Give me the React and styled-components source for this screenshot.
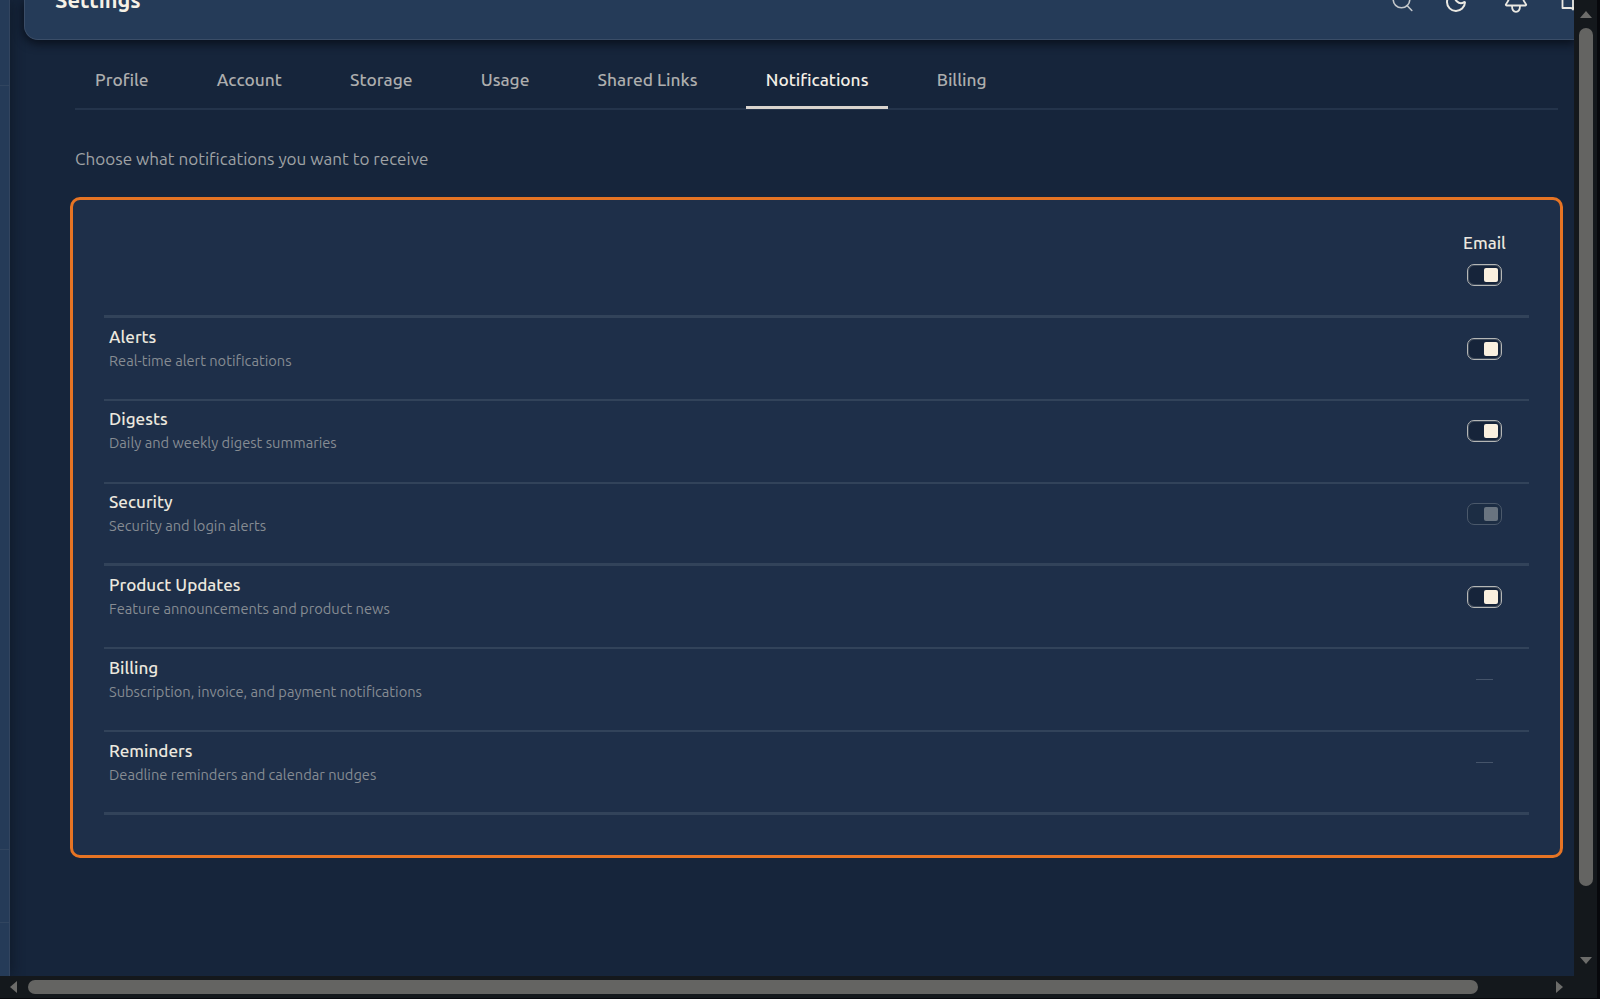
import { useState } from "react";
import styled, { createGlobalStyle } from "styled-components";

const tabs = [
  "Profile",
  "Account",
  "Storage",
  "Usage",
  "Shared Links",
  "Notifications",
  "Billing",
];

const initialRows = [
  {
    title: "Alerts",
    text: "Real-time alert notifications",
    state: "on",
  },
  {
    title: "Digests",
    text: "Daily and weekly digest summaries",
    state: "on",
  },
  {
    title: "Security",
    text: "Security and login alerts",
    state: "locked",
  },
  {
    title: "Product Updates",
    text: "Feature announcements and product news",
    state: "on",
  },
  {
    title: "Billing",
    text: "Subscription, invoice, and payment notifications",
    state: "none",
  },
  {
    title: "Reminders",
    text: "Deadline reminders and calendar nudges",
    state: "none",
  },
];

function Switch({ on, locked, onClick, label }) {
  return (
    <Toggle
      type="button"
      role="switch"
      aria-checked={on}
      aria-label={label}
      disabled={locked}
      $on={on}
      onClick={onClick}
    >
      <Knob />
    </Toggle>
  );
}

function HeaderIcons() {
  return (
    <Icons>
      <Icon width="24" height="24" viewBox="0 0 24 24" $dim>
        <circle cx="10.5" cy="9.5" r="8.3" />
        <path d="M16 15.5 20.8 20.5" />
      </Icon>
      <Icon width="24" height="24" viewBox="0 0 24 24" $space={28.5} $weight={2}>
        <path d="M20.985 12.486a9 9 0 1 1-9.473-9.472c.405-.022.617.46.402.803a6 6 0 0 0 8.268 8.268c.344-.215.825-.004.803.401" />
      </Icon>
      <Icon width="24" height="24" viewBox="0 0 24 24" $space={36} $weight={1.8}>
        <path d="M12-2a6.500 6.500 0 0 0-6.500 7c0 3.600-1.700 7-3.500 9.200-.4.600-.2 1.300.5 1.300h19c.7 0 .9-.7.5-1.300C20.200 12 18.500 8.600 18.500 5A6.500 6.500 0 0 0 12-2z" />
        <path d="M8 15.8c0 3.800 1.600 6 4 6s4-2.200 4-6" />
      </Icon>
      <Icon width="24" height="24" viewBox="0 0 24 24" $space={33.5} $weight={1.8}>
        <path d="M12 5.5C9.500 4 5 3.500 1.500 3.500v14.500h8c1.300 0 2.500.6 2.500 1.500 0-.9 1.200-1.500 2.500-1.500h8V3.500C19 3.500 14.500 4 12 5.500zM12 5.500v14" />
      </Icon>
    </Icons>
  );
}

function App() {
  const [active, setActive] = useState("Notifications");
  const [rows, setRows] = useState(initialRows);
  const allOn = rows.every((row) => row.state !== "off");

  const flip = (title) => {
    setRows(
      rows.map((row) =>
        row.title === title
          ? { ...row, state: row.state === "on" ? "off" : "on" }
          : row
      )
    );
  };

  const flipAll = () => {
    setRows(
      rows.map((row) =>
        row.state === "on" || row.state === "off"
          ? { ...row, state: allOn ? "off" : "on" }
          : row
      )
    );
  };

  return (
    <Screen>
      <GlobalStyle />
      <Viewport>
        <Sidebar>
          <SidePart $height={85} />
          <SidePart $height={763} />
          <SidePart $height={72} />
        </Sidebar>
        <Main>
          <Header>
            <h1>Settings</h1>
            <HeaderIcons />
          </Header>
          <Page>
            <Tabs>
              {tabs.map((tab) => (
                <Tab
                  key={tab}
                  $active={tab === active}
                  onClick={() => setActive(tab)}
                >
                  {tab}
                </Tab>
              ))}
            </Tabs>
            <Intro>Choose what notifications you want to receive</Intro>
            <Panel>
              <PanelHead>
                <Channel>
                  Email
                  <Switch on={allOn} onClick={flipAll} label="All email" />
                </Channel>
              </PanelHead>
              {rows.map((row) => (
                <Row key={row.title}>
                  <div>
                    <RowTitle>{row.title}</RowTitle>
                    <RowText>{row.text}</RowText>
                  </div>
                  <Cell>
                    {row.state === "none" ? (
                      <Dash />
                    ) : (
                      <Switch
                        on={row.state !== "off"}
                        locked={row.state === "locked"}
                        onClick={() => flip(row.title)}
                        label={row.title}
                      />
                    )}
                  </Cell>
                </Row>
              ))}
            </Panel>
          </Page>
        </Main>
      </Viewport>
      <VerticalBar>
        <Arrow width="12" height="7" viewBox="0 0 12 7">
          <path d="M6 0l6 7H0z" />
        </Arrow>
        <VerticalThumb />
        <Arrow width="12" height="7" viewBox="0 0 12 7">
          <path d="M0 0h12L6 7z" />
        </Arrow>
      </VerticalBar>
      <HorizontalBar>
        <Arrow width="7" height="12" viewBox="0 0 7 12">
          <path d="M7 0v12L0 6z" />
        </Arrow>
        <HorizontalThumb />
        <Arrow width="7" height="12" viewBox="0 0 7 12">
          <path d="M0 0l7 6-7 6z" />
        </Arrow>
      </HorizontalBar>
    </Screen>
  );
}

const GlobalStyle = createGlobalStyle`
  * {
    box-sizing: border-box;
  }
  body {
    margin: 0;
    background: #000;
    overflow: hidden;
  }
  h1, p {
    margin: 0;
  }
`;

const Screen = styled.div`
  width: 1600px;
  height: 999px;
  display: grid;
  grid-template-columns: 1574px 23px;
  grid-template-rows: 976px 22px;
  font-family: Ubuntu, "Noto Sans", sans-serif;
  font-size: 17.1px;
  color: #ece8df;
  background: #07080c;
`;

const Viewport = styled.div`
  display: flex;
  overflow: hidden;
  background: #16253b;
`;

const Sidebar = styled.aside`
  flex: 0 0 10px;
  background: #253b58;
  border-right: 1px solid #33455f;
  box-shadow: 0 0 14px rgba(9, 16, 26, 0.75);
`;

const SidePart = styled.div`
  height: ${(props) => props.$height}px;
  border-bottom: 1px solid #31455f;
  box-sizing: content-box;
`;

const Main = styled.main`
  flex: 1;
  min-width: 0;
  padding-left: 14px;
`;

const Header = styled.header`
  height: 40px;
  display: flex;
  justify-content: space-between;
  padding-left: 30px;
  background: #253b58;
  border-left: 1px solid #3a4d67;
  border-bottom: 1px solid #3a4d67;
  border-bottom-left-radius: 14px;
  box-shadow: 0 3px 10px 1px rgba(7, 13, 24, 0.85);

  h1 {
    margin-top: -16px;
    font-size: 21.8px;
    line-height: 32px;
    font-weight: 700;
    color: #f6f1e6;
  }
`;

const Icons = styled.div`
  display: flex;
  margin: -10px -11px 0 0;
`;

const Icon = styled.svg`
  flex: none;
  margin-left: ${(props) => props.$space || 0}px;
  fill: none;
  stroke: ${(props) => (props.$dim ? "#c3c7cb" : "#eae8e2")};
  stroke-width: ${(props) => props.$weight || 1.6};
  stroke-linecap: round;
  stroke-linejoin: round;
`;

const Page = styled.section`
  padding: 20px 16px 0 51px;
`;

const Tabs = styled.nav`
  display: flex;
  gap: 28.2px;
  height: 50px;
  border-bottom: 2px solid #24344b;
`;

const Tab = styled.button`
  height: 49px;
  padding: 0 20px 8px;
  border: 0;
  border-bottom: 3px solid
    ${(props) => (props.$active ? "#d9d4ce" : "transparent")};
  background: none;
  font: inherit;
  font-size: 17.35px;
  font-weight: 500;
  white-space: nowrap;
  color: ${(props) => (props.$active ? "#f3efe6" : "#adaeae")};
  cursor: pointer;
`;

const Intro = styled.p`
  margin-top: 37px;
  line-height: 24px;
  color: #9fa2a5;
`;

const Panel = styled.div`
  height: 661px;
  margin: 26px -5px 0;
  padding: 0 31px;
  border: 3px solid #e67424;
  border-radius: 10px;
  background: #1e2f49;

  > * {
    border-bottom: 2px solid #32435a;
  }
  > :nth-child(3n + 1) {
    border-bottom-width: 3px;
  }
`;

const PanelHead = styled.div`
  height: 118px;
  display: flex;
  justify-content: flex-end;
  padding: 31px 22px 0 0;
`;

const Channel = styled.div`
  display: flex;
  flex-direction: column;
  align-items: center;
  width: 45px;
  line-height: 24px;
  font-weight: 500;
  gap: 9px;
`;

const Row = styled.div`
  display: flex;
  justify-content: space-between;
  height: 82.8px;
  padding: 6.6px 22px 0 5px;
`;

const RowTitle = styled.p`
  line-height: 24px;
  font-weight: 500;
`;

const RowText = styled.p`
  font-size: 14.65px;
  line-height: 23px;
  color: #868c93;
`;

const Cell = styled.div`
  display: flex;
  align-items: center;
  justify-content: center;
  width: 45px;
  height: 48px;
`;

const Toggle = styled.button`
  display: flex;
  align-items: center;
  justify-content: ${(props) => (props.$on ? "flex-end" : "flex-start")};
  width: 35px;
  height: 22px;
  padding: 0 3px;
  border: 1px solid #b5b7b6;
  border-radius: 7px;
  background: #16243a;
  box-shadow: inset 0 0 0 1px rgba(181, 183, 182, 0.25);
  cursor: pointer;

  &:disabled {
    border-color: #4b596b;
    background: #1c2d44;
    box-shadow: none;
    cursor: default;
  }
`;

const Knob = styled.span`
  width: 14px;
  height: 14px;
  border-radius: 2px;
  background: #faf0df;

  ${Toggle}:disabled & {
    background: #697480;
  }
`;

const Dash = styled.span`
  width: 17px;
  height: 1px;
  background: #45546a;
`;

const VerticalBar = styled.div`
  display: flex;
  flex-direction: column;
  align-items: center;
  padding: 11px 0 12px;
  background: #14181c;
`;

const HorizontalBar = styled.div`
  grid-column: 1 / 3;
  display: flex;
  align-items: center;
  padding: 0 34px 0 10px;
  background: #14181c;
`;

const Arrow = styled.svg`
  flex: none;
  fill: #6c6c6a;
`;

const VerticalThumb = styled.div`
  width: 14px;
  height: 858px;
  margin: 10px 0 71px;
  border-radius: 7px;
  background: #646462;
`;

const HorizontalThumb = styled.div`
  width: 1450px;
  height: 14px;
  margin: 0 78px 0 11px;
  border-radius: 7px;
  background: #646462;
`;

export default App;
